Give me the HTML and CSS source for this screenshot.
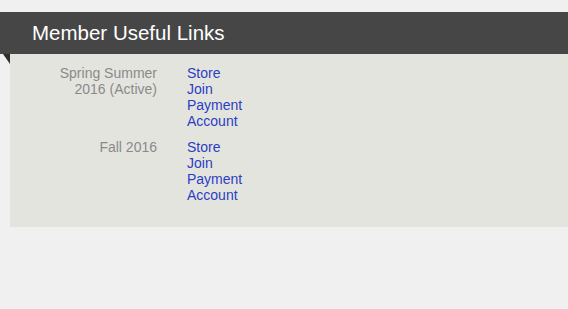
FILE: index.html
```html
<!DOCTYPE html>
<html>
<head>
<meta charset="utf-8">
<link rel="stylesheet" href="styles.css">
</head>
<body>
<section class="widget">
  <h2 class="widget-title">Member Useful Links</h2>
  <div class="widget-body">
    <div class="season">
      <div class="season-name">Spring Summer<br>2016 (Active)</div>
      <ul class="links">
        <li><a href="#">Store</a></li>
        <li><a href="#">Join</a></li>
        <li><a href="#">Payment</a></li>
        <li><a href="#">Account</a></li>
      </ul>
    </div>
    <div class="season">
      <div class="season-name">Fall 2016</div>
      <ul class="links">
        <li><a href="#">Store</a></li>
        <li><a href="#">Join</a></li>
        <li><a href="#">Payment</a></li>
        <li><a href="#">Account</a></li>
      </ul>
    </div>
  </div>
</section>
</body>
</html>
```
FILE: styles.css
```css
html, body {
  margin: 0;
  padding: 0;
  background: #f0f0f0;
  font-family: "Liberation Sans", Arial, sans-serif;
}
.widget {
  padding-top: 12px;
}
.widget-title {
  position: relative;
  margin: 0;
  height: 42px;
  line-height: 41px;
  background: #464646;
  color: #ffffff;
  font-size: 20.5px;
  font-weight: normal;
  padding-left: 32px;
}
.widget-title::after {
  content: "";
  position: absolute;
  left: 3px;
  top: 42px;
  width: 0;
  height: 0;
  border-top: 10px solid #2e2e2e;
  border-left: 7px solid transparent;
}
.widget-body {
  margin-left: 10px;
  height: 162px;
  padding-top: 11px;
  background: #e4e4df;
  display: flex;
  flex-direction: column;
  gap: 10px;
}
.season {
  display: flex;
  gap: 30px;
  font-size: 14px;
  line-height: 16px;
}
.season-name {
  width: 147px;
  text-align: right;
  color: #8a8a8a;
}
.links {
  list-style: none;
  margin: 0;
  padding: 0;
}
.links a {
  color: #2a3ec2;
  text-decoration: none;
}
```
